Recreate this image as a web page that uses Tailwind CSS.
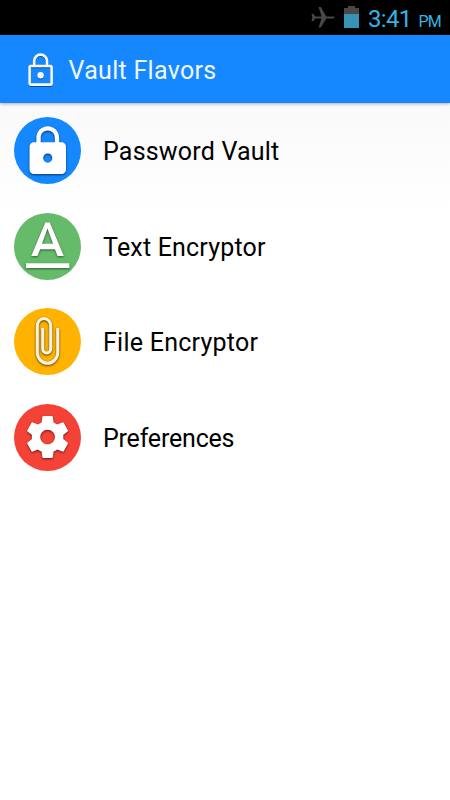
<!DOCTYPE html>
<html lang="en">
<head>
<meta charset="utf-8">
<title>Vault Flavors</title>
<script src="https://cdn.jsdelivr.net/npm/@tailwindcss/browser@4"></script>
</head>
<body class="flex h-[800px] w-[450px] flex-col overflow-hidden bg-white font-[Roboto,sans-serif] text-black">
<div class="flex h-[35px] shrink-0 items-center justify-end bg-black pr-[9px] text-[#33b5e5]">
  <svg class="mr-[9px] h-6 w-6" viewBox="0 0 24 24" fill="#484848"><path d="M23.5 11.5c0 .8-.8 1.1-1.5 1.1h-6.7L9.8 21.5H7.6l2.9-8.9H4.2l-2.1 2.7H.4l1-3.8-1-3.8h1.7l2.1 2.7h6.3L7.6 1h2.2l5.5 9.4H22c.7 0 1.5.3 1.5 1.1z"/></svg>
  <svg class="mr-[9.5px] mb-[1px] h-[22px] w-[15px]" viewBox="0 0 15 22"><path fill="#484848" d="M4 0h7v2h4v6H0V2h4z"/><path fill="#3793b6" d="M0 8h15v14H0z"/></svg>
  <div class="flex h-[35px] items-baseline pt-[3px] leading-[32px]"><span class="text-[24px] tracking-[-0.7px]">3:41</span><span class="ml-[7px] text-[16px] tracking-[-0.8px]">PM</span></div>
</div>
<header class="z-10 flex h-[68px] shrink-0 items-center bg-[#1588ff] pt-[2px] pl-[26.5px] text-[#f0f6ff] shadow-[0_1px_3px_rgba(0,0,0,0.3)]">
  <svg class="h-[34px] w-[27px] drop-shadow-[0_1px_0.5px_rgba(0,0,0,0.4)]" viewBox="0 0 27 34" fill="none" stroke="#f7f7f7" stroke-width="2.6"><rect x="2.6" y="13" width="22" height="18.6" rx="1.2"/><path d="M7.2 13V8a6.4 6.4 0 0 1 12.8 0v5"/><circle cx="13.6" cy="22.3" r="3.2" fill="#f7f7f7" stroke="none"/></svg>
  <h1 class="ml-[15px] pt-[2px] text-[25px] tracking-[0.3px]">Vault Flavors</h1>
</header>
<main class="flex-1 bg-gradient-to-b from-[#f9f9f9] to-white to-[110px] text-[25px]">
  <div class="flex h-[95.6px] items-center pl-[14px]">
    <svg class="mr-[22px] h-[67px] w-[67px]" viewBox="0 0 67 67"><circle cx="33.5" cy="33.5" r="33.5" fill="#1588ff"/><g class="drop-shadow-[0_1.2px_0.8px_rgba(0,0,0,0.6)]"><path fill="#fff" transform="translate(6.4 6.9) scale(2.28)" d="M18 8h-1V6c0-2.76-2.24-5-5-5S7 3.24 7 6v2H6c-1.1 0-2 .9-2 2v10c0 1.1.9 2 2 2h12c1.1 0 2-.9 2-2V10c0-1.1-.9-2-2-2zm-6 9c-1.1 0-2-.9-2-2s.9-2 2-2 2 .9 2 2-.9 2-2 2zm3.1-9H8.9V6c0-1.71 1.39-3.1 3.1-3.1s3.1 1.39 3.1 3.1v2z"/></g></svg>
    <span class="pt-[2px] tracking-[0.2px]">Password Vault</span>
  </div>
  <div class="flex h-[95.6px] items-center pl-[14px]">
    <svg class="mr-[22px] h-[67px] w-[67px]" viewBox="0 0 67 67"><circle cx="33.5" cy="33.5" r="33.5" fill="#66bb6a"/><g fill="#fff" class="drop-shadow-[0_1.5px_0.8px_rgba(0,0,0,0.5)]"><path transform="translate(-2 -2.5) scale(2.96 3.03)" d="M9.5 12.8h5l.9 2.2h2.1L12.75 4h-1.5L6.5 15h2.1l.9-2.2zM12 5.98 13.87 11h-3.74L12 5.98z"/><path d="M12 50.3h43.4v4.6H12z"/></g></svg>
    <span class="pt-[2px] tracking-[0.18px]">Text Encryptor</span>
  </div>
  <div class="flex h-[95.6px] items-center pl-[14px]">
    <svg class="mr-[22px] h-[67px] w-[67px]" viewBox="0 0 67 67"><circle cx="33.5" cy="33.5" r="33.5" fill="#ffb300"/><path class="drop-shadow-[0_1.2px_0.9px_rgba(0,0,0,0.65)]" fill="none" stroke="#f5f2ec" stroke-width="3" d="M43.7 20v24.5a10.2 10.8 0 0 1-20.4 0V18a6.7 7.6 0 0 1 13.4 0v22.6a4 4.5 0 0 1-8 0V20"/></svg>
    <span class="pt-[2px] tracking-[0.25px]">File Encryptor</span>
  </div>
  <div class="flex h-[95.6px] items-center pl-[14px]">
    <svg class="mr-[22px] h-[67px] w-[67px]" viewBox="0 0 67 67"><circle cx="33.5" cy="33.5" r="33.5" fill="#f44336"/><g class="drop-shadow-[0_1.2px_0.8px_rgba(0,0,0,0.6)]"><path fill="#fff" transform="translate(8.4 7.8) scale(2.1)" d="M19.43 12.98c.04-.32.07-.64.07-.98s-.03-.66-.07-.98l2.11-1.65c.19-.15.24-.42.12-.64l-2-3.46c-.12-.22-.39-.3-.61-.22l-2.49 1c-.52-.4-1.08-.73-1.69-.98l-.38-2.65C14.46 2.18 14.25 2 14 2h-4c-.25 0-.46.18-.49.42l-.38 2.65c-.61.25-1.17.59-1.69.98l-2.49-1c-.23-.09-.49 0-.61.22l-2 3.46c-.13.22-.07.49.12.64l2.11 1.65c-.04.32-.07.65-.07.98s.03.66.07.98l-2.11 1.65c-.19.15-.24.42-.12.64l2 3.46c.12.22.39.3.61.22l2.49-1c.52.4 1.08.73 1.69.98l.38 2.65c.03.24.24.42.49.42h4c.25 0 .46-.18.49-.42l.38-2.65c.61-.25 1.17-.59 1.69-.98l2.49 1c.23.09.49 0 .61-.22l2-3.46c.12-.22.07-.49-.12-.64l-2.11-1.65zM12 15.5c-1.93 0-3.5-1.57-3.5-3.5s1.57-3.5 3.5-3.5 3.5 1.57 3.5 3.5-1.57 3.5-3.5 3.5z"/></g></svg>
    <span class="pt-[2px] tracking-[-0.2px]">Preferences</span>
  </div>
</main>
</body>
</html>
